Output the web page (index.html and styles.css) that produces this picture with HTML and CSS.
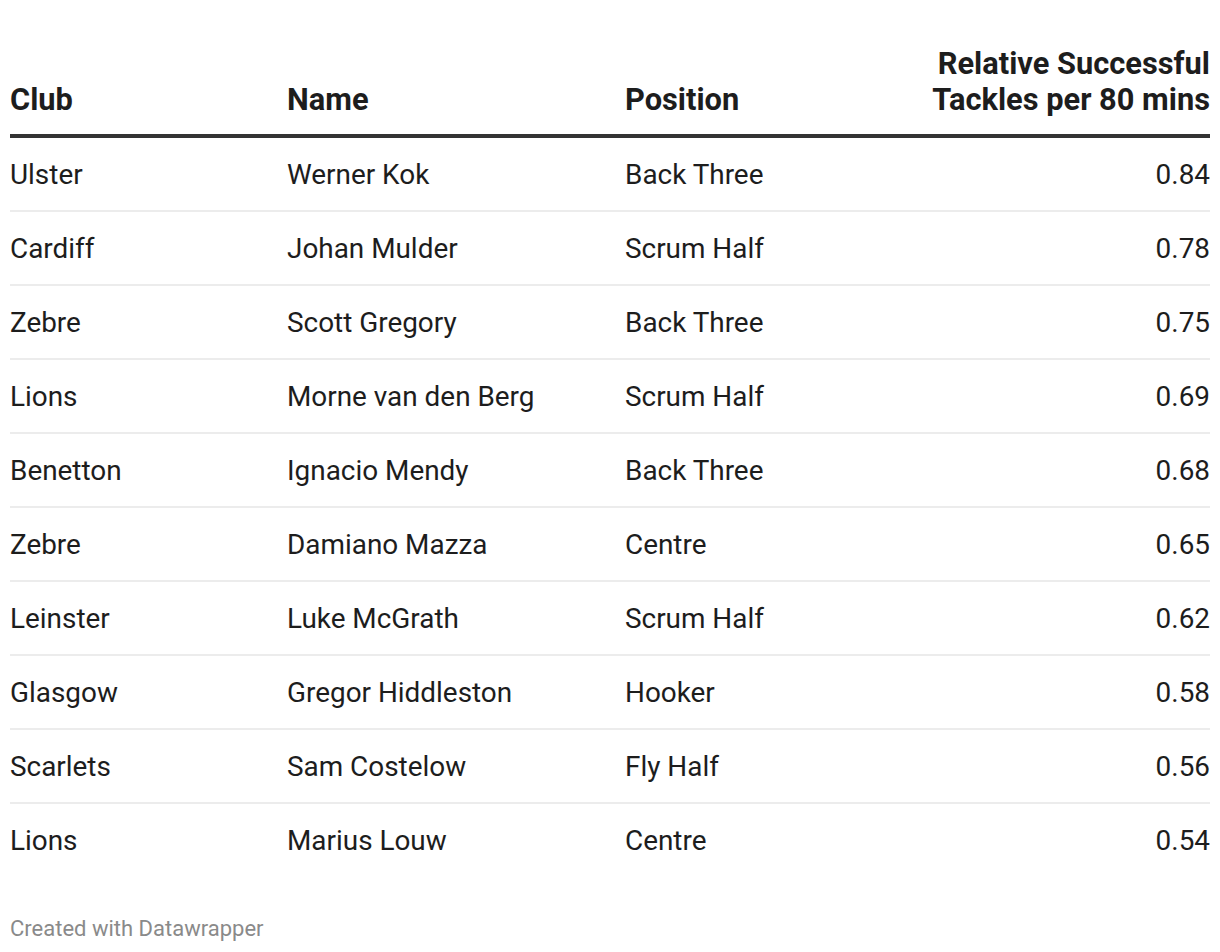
FILE: index.html
```html
<!DOCTYPE html>
<html>
<head>
<meta charset="utf-8">
<link rel="stylesheet" href="styles.css">
</head>
<body>
<div class="chart">
  <table class="data">
    <colgroup>
      <col class="c1"><col class="c2"><col class="c3"><col class="c4">
    </colgroup>
    <thead>
      <tr>
        <th>Club</th>
        <th>Name</th>
        <th>Position</th>
        <th class="num">Relative Successful Tackles per 80 mins</th>
      </tr>
    </thead>
    <tbody>
      <tr><td>Ulster</td><td>Werner Kok</td><td>Back Three</td><td class="num">0.84</td></tr>
      <tr><td>Cardiff</td><td>Johan Mulder</td><td>Scrum Half</td><td class="num">0.78</td></tr>
      <tr><td>Zebre</td><td>Scott Gregory</td><td>Back Three</td><td class="num">0.75</td></tr>
      <tr><td>Lions</td><td>Morne van den Berg</td><td>Scrum Half</td><td class="num">0.69</td></tr>
      <tr><td>Benetton</td><td>Ignacio Mendy</td><td>Back Three</td><td class="num">0.68</td></tr>
      <tr><td>Zebre</td><td>Damiano Mazza</td><td>Centre</td><td class="num">0.65</td></tr>
      <tr><td>Leinster</td><td>Luke McGrath</td><td>Scrum Half</td><td class="num">0.62</td></tr>
      <tr><td>Glasgow</td><td>Gregor Hiddleston</td><td>Hooker</td><td class="num">0.58</td></tr>
      <tr><td>Scarlets</td><td>Sam Costelow</td><td>Fly Half</td><td class="num">0.56</td></tr>
      <tr><td>Lions</td><td>Marius Louw</td><td>Centre</td><td class="num">0.54</td></tr>
    </tbody>
  </table>
  <div class="footer">Created with Datawrapper</div>
</div>
</body>
</html>
```
FILE: styles.css
```css
html, body {
  margin: 0;
  padding: 0;
  background: #ffffff;
}
body {
  font-family: Roboto, "Liberation Sans", sans-serif;
  color: #1d1d1d;
}
.chart {
  padding: 46px 10px 0 10px;
}
.data {
  width: 1200px;
  border-collapse: collapse;
  table-layout: fixed;
}
.c1 { width: 277px; }
.c2 { width: 338px; }
.c3 { width: 300px; }
.c4 { width: 285px; }
.data th {
  font-weight: 700;
  font-size: 30.8px;
  line-height: 36px;
  text-align: left;
  vertical-align: bottom;
  padding: 0 0 16px 0;
  border-bottom: 4px solid #333333;
}
.data td {
  font-size: 27.9px;
  height: 72px;
  padding: 0;
  vertical-align: middle;
  border-bottom: 2px solid #ececec;
}
.data tbody tr:last-child td {
  border-bottom: none;
}
.data .num {
  text-align: right;
}
.footer {
  margin-top: 40px;
  font-size: 22px;
  color: #8a8a8a;
}
```
